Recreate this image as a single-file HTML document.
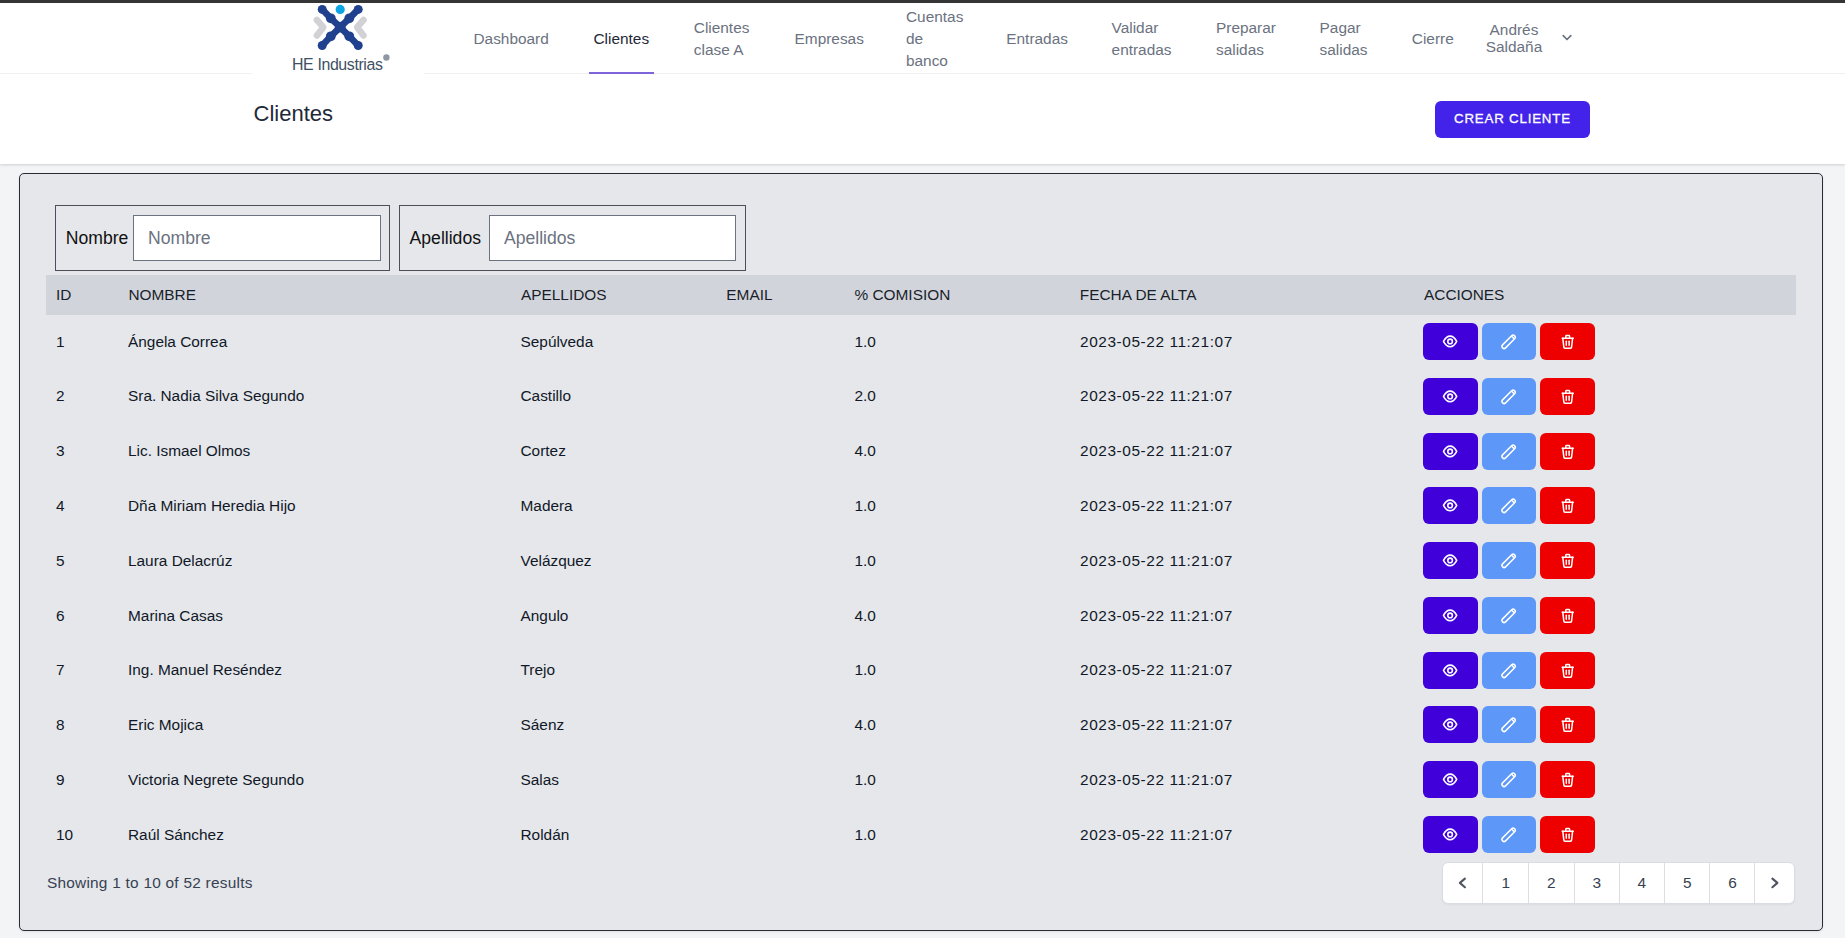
<!DOCTYPE html>
<html lang="es"><head><meta charset="utf-8"><title>Clientes</title>
<style>
*{box-sizing:border-box;margin:0;padding:0}
html,body{width:1845px;height:938px;overflow:hidden;background:#f3f4f6;font-family:"Liberation Sans", sans-serif;position:relative}
.t{position:absolute;white-space:nowrap;z-index:5}
#topbar{z-index:3;position:absolute;left:0;top:0;width:1845px;height:3px;background:#353535}
#nav{z-index:2;position:absolute;left:0;top:3px;width:1845px;height:71px;background:#fff;border-bottom:1px solid #eef0f2}
#logo{z-index:3;position:absolute;left:252px;top:3px;width:172px;height:71px;background:#fff}
#header{position:absolute;left:0;top:74px;width:1845px;height:90px;background:#fff;box-shadow:0 1px 3px rgba(0,0,0,.1),0 1px 2px rgba(0,0,0,.06)}
#crear{position:absolute;left:1435px;top:101px;width:155px;height:37px;background:#4323ea;border-radius:6px}
#card{position:absolute;left:19px;top:173px;width:1804px;height:758px;background:#e5e7eb;border:1px solid #2a2a36;border-radius:5px;box-shadow:0 1px 3px rgba(0,0,0,.08)}
.fbox{position:absolute;top:205px;height:66px;border:1px solid #4b4f5c}
.inp{position:absolute;top:215px;height:46px;background:#fff;border:1px solid #6b7280}
#thead{position:absolute;left:46px;top:275px;width:1750px;height:40px;background:#d1d5db}
.btn{position:absolute;height:37px;border-radius:6px}
#pag{position:absolute;left:1442px;top:862px;width:353px;height:42px;background:#fff;border:1px solid #d9dce1;border-radius:6px;box-shadow:0 1px 2px rgba(0,0,0,.05)}
</style></head>
<body>
<div id="topbar"></div>
<div id="nav"></div>
<div class="t" style="left:473.5px;top:28.20px;font-size:15.4px;line-height:22px;color:#6b7280;letter-spacing:0px;font-weight:400;">Dashboard</div>
<div class="t" style="left:593.5px;top:28.20px;font-size:15.4px;line-height:22px;color:#1f2937;letter-spacing:0px;font-weight:400;">Clientes</div>
<div class="t" style="left:693.8px;top:17.20px;font-size:15.4px;line-height:22px;color:#6b7280;letter-spacing:0px;font-weight:400;">Clientes<br>clase A</div>
<div class="t" style="left:794.6px;top:28.20px;font-size:15.4px;line-height:22px;color:#6b7280;letter-spacing:0px;font-weight:400;">Empresas</div>
<div class="t" style="left:906px;top:6.20px;font-size:15.4px;line-height:22px;color:#6b7280;letter-spacing:0px;font-weight:400;">Cuentas<br>de<br>banco</div>
<div class="t" style="left:1006.3px;top:28.20px;font-size:15.4px;line-height:22px;color:#6b7280;letter-spacing:0px;font-weight:400;">Entradas</div>
<div class="t" style="left:1111.6px;top:17.20px;font-size:15.4px;line-height:22px;color:#6b7280;letter-spacing:0px;font-weight:400;">Validar<br>entradas</div>
<div class="t" style="left:1216px;top:17.20px;font-size:15.4px;line-height:22px;color:#6b7280;letter-spacing:0px;font-weight:400;">Preparar<br>salidas</div>
<div class="t" style="left:1319.6px;top:17.20px;font-size:15.4px;line-height:22px;color:#6b7280;letter-spacing:0px;font-weight:400;">Pagar<br>salidas</div>
<div class="t" style="left:1411.8px;top:28.20px;font-size:15.4px;line-height:22px;color:#6b7280;letter-spacing:0px;font-weight:400;">Cierre</div>
<div style="position:absolute;z-index:4;left:589px;top:72px;width:65px;height:2px;background:#7d64db"></div>
<div class="t" style="z-index:4;left:1464px;top:21.20px;width:100px;text-align:center;font-size:15.4px;line-height:17px;color:#6b7280">Andrés<br>Saldaña</div>
<svg style="position:absolute;z-index:4;left:1560px;top:32px" width="14" height="12" viewBox="0 0 14 12"><path d="M3.2 3.7 L7 7.5 L10.8 3.7" fill="none" stroke="#6b7280" stroke-width="1.7" stroke-linecap="round" stroke-linejoin="round"/></svg>
<div id="logo"><svg width="172" height="71" viewBox="0 0 172 71" style="position:absolute;left:0;top:0">
<g stroke="#d2d2d6" stroke-width="6.5" stroke-linecap="round" stroke-linejoin="round" fill="none">
<path d="M64.9 17 L71.3 24.2 L64.9 32.5"/><path d="M111.5 17 L105.1 24.2 L111.5 32.5"/>
</g>
<g stroke="#1f418e" stroke-width="6.6" stroke-linecap="round" stroke-linejoin="round" fill="none">
<path d="M70.2 6.4 L78.8 15.3 L88.2 24.2 L97.3 33.3 L106.2 42.5"/>
<path d="M106.2 6.4 L97.3 15.3 L88.2 24.2 L78.8 33.3 L70.2 42.5"/>
</g>
<g fill="#1f418e">
<circle cx="70.2" cy="6.4" r="4.5"/><circle cx="106.2" cy="6.4" r="4.5"/>
<circle cx="70.2" cy="42.5" r="4.5"/><circle cx="106.2" cy="42.5" r="4.5"/>
<circle cx="78.8" cy="15.3" r="4.9"/><circle cx="97.3" cy="15.3" r="4.9"/>
<circle cx="78.8" cy="33.3" r="4.9"/><circle cx="97.3" cy="33.3" r="4.9"/>
<circle cx="88.2" cy="24.2" r="5.4"/>
</g>
<circle cx="88.2" cy="6.4" r="4.6" fill="#0ba5e6"/>
<circle cx="134.4" cy="54.5" r="3.2" fill="#8d98a3"/>
</svg>
<div style="position:absolute;left:39.8px;top:52.2px;font-size:16.8px;line-height:20px;color:#3e5064;letter-spacing:-0.4px;white-space:nowrap;transform:scaleX(0.948);transform-origin:0 0">HE Industrias</div>
</div>
<div id="header"></div>
<div class="t" style="left:253.6px;top:99.70px;font-size:22px;line-height:28px;color:#1f2937;letter-spacing:0px;font-weight:400;">Clientes</div>
<div id="crear"></div>
<div class="t" style="left:1454px;top:109.80px;font-size:13.3px;line-height:18px;color:#ffffff;letter-spacing:0.8px;font-weight:400;-webkit-text-stroke:0.3px #fff">CREAR CLIENTE</div>
<div id="card"></div>
<div class="fbox" style="left:55px;width:335px"></div>
<div class="fbox" style="left:399px;width:347px"></div>
<div class="inp" style="left:133px;width:248px"></div>
<div class="inp" style="left:489px;width:247px"></div>
<div class="t" style="left:65.8px;top:225.80px;font-size:17.6px;line-height:24px;color:#111111;letter-spacing:0px;font-weight:400;">Nombre</div>
<div class="t" style="left:409.6px;top:225.80px;font-size:17.6px;line-height:24px;color:#111111;letter-spacing:0px;font-weight:400;">Apellidos</div>
<div class="t" style="left:148px;top:225.90px;font-size:17.6px;line-height:24px;color:#6b7280;letter-spacing:0px;font-weight:400;">Nombre</div>
<div class="t" style="left:504px;top:225.90px;font-size:17.6px;line-height:24px;color:#6b7280;letter-spacing:0px;font-weight:400;">Apellidos</div>
<div id="thead"></div>
<div class="t" style="left:56px;top:284.80px;font-size:15.4px;line-height:20px;color:#1a1f2b;letter-spacing:0px;font-weight:400;">ID</div>
<div class="t" style="left:128.4px;top:284.80px;font-size:15.4px;line-height:20px;color:#1a1f2b;letter-spacing:0px;font-weight:400;">NOMBRE</div>
<div class="t" style="left:521px;top:284.80px;font-size:15.4px;line-height:20px;color:#1a1f2b;letter-spacing:0px;font-weight:400;">APELLIDOS</div>
<div class="t" style="left:726.3px;top:284.80px;font-size:15.4px;line-height:20px;color:#1a1f2b;letter-spacing:0px;font-weight:400;">EMAIL</div>
<div class="t" style="left:854.5px;top:284.80px;font-size:15.4px;line-height:20px;color:#1a1f2b;letter-spacing:0px;font-weight:400;">% COMISION</div>
<div class="t" style="left:1079.8px;top:284.80px;font-size:15.4px;line-height:20px;color:#1a1f2b;letter-spacing:0px;font-weight:400;">FECHA DE ALTA</div>
<div class="t" style="left:1424px;top:284.80px;font-size:15.4px;line-height:20px;color:#1a1f2b;letter-spacing:0px;font-weight:400;">ACCIONES</div>
<div class="t" style="left:56px;top:331.70px;font-size:15.4px;line-height:20px;color:#111827;letter-spacing:0px;font-weight:400;">1</div>
<div class="t" style="left:128px;top:331.70px;font-size:15.4px;line-height:20px;color:#111827;letter-spacing:0px;font-weight:400;">Ángela Correa</div>
<div class="t" style="left:520.5px;top:331.70px;font-size:15.4px;line-height:20px;color:#111827;letter-spacing:0px;font-weight:400;">Sepúlveda</div>
<div class="t" style="left:854.5px;top:331.70px;font-size:15.4px;line-height:20px;color:#111827;letter-spacing:0px;font-weight:400;">1.0</div>
<div class="t" style="left:1080px;top:331.70px;font-size:15.4px;line-height:20px;color:#111827;letter-spacing:0.58px;font-weight:400;">2023-05-22 11:21:07</div>
<div class="btn" style="left:1423px;top:323.00px;width:55px;background:#3f00d9"><svg width="55" height="37" viewBox="0 0 55 37" style="position:absolute;left:0;top:0" fill="none" stroke="#fff" stroke-width="1.6" stroke-linecap="round" stroke-linejoin="round"><path d="M20.5 18.4 C22.4 14.6 24.8 13.1 27.1 13.1 C29.4 13.1 31.8 14.6 33.7 18.4 C31.8 22.2 29.4 23.7 27.1 23.7 C24.8 23.7 22.4 22.2 20.5 18.4 Z"/><circle cx="27.1" cy="18.4" r="2.3"/></svg></div>
<div class="btn" style="left:1482px;top:323.00px;width:54px;background:#5d97f8"><svg width="54" height="37" viewBox="0 0 54 37" style="position:absolute;left:0;top:0" fill="none" stroke="#fff" stroke-width="1.5" stroke-linecap="round" stroke-linejoin="round"><rect x="18.1" y="16.75" width="17" height="4.2" rx="2.1" transform="rotate(-45 26.6 18.85)"/><path d="M29.9 13.5 L31.9 15.5"/></svg></div>
<div class="btn" style="left:1540px;top:323.00px;width:55px;background:#ee0000"><svg width="55" height="37" viewBox="0 0 55 37" style="position:absolute;left:0;top:0" fill="none" stroke="#fff" stroke-width="1.5" stroke-linecap="round" stroke-linejoin="round"><path d="M22.2 15.2 H33.2"/><path d="M22.8 15.2 L23.8 24 A1.6 1.6 0 0 0 25.4 25.3 H30 A1.6 1.6 0 0 0 31.6 24 L32.6 15.2"/><path d="M25.8 15 V13.2 A0.9 0.9 0 0 1 26.7 12.4 H28.7 A0.9 0.9 0 0 1 29.6 13.2 V15"/><path d="M26.3 18.3 V22.3"/><path d="M29.1 18.3 V22.3"/></svg></div>
<div class="t" style="left:56px;top:386.48px;font-size:15.4px;line-height:20px;color:#111827;letter-spacing:0px;font-weight:400;">2</div>
<div class="t" style="left:128px;top:386.48px;font-size:15.4px;line-height:20px;color:#111827;letter-spacing:0px;font-weight:400;">Sra. Nadia Silva Segundo</div>
<div class="t" style="left:520.5px;top:386.48px;font-size:15.4px;line-height:20px;color:#111827;letter-spacing:0px;font-weight:400;">Castillo</div>
<div class="t" style="left:854.5px;top:386.48px;font-size:15.4px;line-height:20px;color:#111827;letter-spacing:0px;font-weight:400;">2.0</div>
<div class="t" style="left:1080px;top:386.48px;font-size:15.4px;line-height:20px;color:#111827;letter-spacing:0.58px;font-weight:400;">2023-05-22 11:21:07</div>
<div class="btn" style="left:1423px;top:377.78px;width:55px;background:#3f00d9"><svg width="55" height="37" viewBox="0 0 55 37" style="position:absolute;left:0;top:0" fill="none" stroke="#fff" stroke-width="1.6" stroke-linecap="round" stroke-linejoin="round"><path d="M20.5 18.4 C22.4 14.6 24.8 13.1 27.1 13.1 C29.4 13.1 31.8 14.6 33.7 18.4 C31.8 22.2 29.4 23.7 27.1 23.7 C24.8 23.7 22.4 22.2 20.5 18.4 Z"/><circle cx="27.1" cy="18.4" r="2.3"/></svg></div>
<div class="btn" style="left:1482px;top:377.78px;width:54px;background:#5d97f8"><svg width="54" height="37" viewBox="0 0 54 37" style="position:absolute;left:0;top:0" fill="none" stroke="#fff" stroke-width="1.5" stroke-linecap="round" stroke-linejoin="round"><rect x="18.1" y="16.75" width="17" height="4.2" rx="2.1" transform="rotate(-45 26.6 18.85)"/><path d="M29.9 13.5 L31.9 15.5"/></svg></div>
<div class="btn" style="left:1540px;top:377.78px;width:55px;background:#ee0000"><svg width="55" height="37" viewBox="0 0 55 37" style="position:absolute;left:0;top:0" fill="none" stroke="#fff" stroke-width="1.5" stroke-linecap="round" stroke-linejoin="round"><path d="M22.2 15.2 H33.2"/><path d="M22.8 15.2 L23.8 24 A1.6 1.6 0 0 0 25.4 25.3 H30 A1.6 1.6 0 0 0 31.6 24 L32.6 15.2"/><path d="M25.8 15 V13.2 A0.9 0.9 0 0 1 26.7 12.4 H28.7 A0.9 0.9 0 0 1 29.6 13.2 V15"/><path d="M26.3 18.3 V22.3"/><path d="M29.1 18.3 V22.3"/></svg></div>
<div class="t" style="left:56px;top:441.26px;font-size:15.4px;line-height:20px;color:#111827;letter-spacing:0px;font-weight:400;">3</div>
<div class="t" style="left:128px;top:441.26px;font-size:15.4px;line-height:20px;color:#111827;letter-spacing:0px;font-weight:400;">Lic. Ismael Olmos</div>
<div class="t" style="left:520.5px;top:441.26px;font-size:15.4px;line-height:20px;color:#111827;letter-spacing:0px;font-weight:400;">Cortez</div>
<div class="t" style="left:854.5px;top:441.26px;font-size:15.4px;line-height:20px;color:#111827;letter-spacing:0px;font-weight:400;">4.0</div>
<div class="t" style="left:1080px;top:441.26px;font-size:15.4px;line-height:20px;color:#111827;letter-spacing:0.58px;font-weight:400;">2023-05-22 11:21:07</div>
<div class="btn" style="left:1423px;top:432.56px;width:55px;background:#3f00d9"><svg width="55" height="37" viewBox="0 0 55 37" style="position:absolute;left:0;top:0" fill="none" stroke="#fff" stroke-width="1.6" stroke-linecap="round" stroke-linejoin="round"><path d="M20.5 18.4 C22.4 14.6 24.8 13.1 27.1 13.1 C29.4 13.1 31.8 14.6 33.7 18.4 C31.8 22.2 29.4 23.7 27.1 23.7 C24.8 23.7 22.4 22.2 20.5 18.4 Z"/><circle cx="27.1" cy="18.4" r="2.3"/></svg></div>
<div class="btn" style="left:1482px;top:432.56px;width:54px;background:#5d97f8"><svg width="54" height="37" viewBox="0 0 54 37" style="position:absolute;left:0;top:0" fill="none" stroke="#fff" stroke-width="1.5" stroke-linecap="round" stroke-linejoin="round"><rect x="18.1" y="16.75" width="17" height="4.2" rx="2.1" transform="rotate(-45 26.6 18.85)"/><path d="M29.9 13.5 L31.9 15.5"/></svg></div>
<div class="btn" style="left:1540px;top:432.56px;width:55px;background:#ee0000"><svg width="55" height="37" viewBox="0 0 55 37" style="position:absolute;left:0;top:0" fill="none" stroke="#fff" stroke-width="1.5" stroke-linecap="round" stroke-linejoin="round"><path d="M22.2 15.2 H33.2"/><path d="M22.8 15.2 L23.8 24 A1.6 1.6 0 0 0 25.4 25.3 H30 A1.6 1.6 0 0 0 31.6 24 L32.6 15.2"/><path d="M25.8 15 V13.2 A0.9 0.9 0 0 1 26.7 12.4 H28.7 A0.9 0.9 0 0 1 29.6 13.2 V15"/><path d="M26.3 18.3 V22.3"/><path d="M29.1 18.3 V22.3"/></svg></div>
<div class="t" style="left:56px;top:496.04px;font-size:15.4px;line-height:20px;color:#111827;letter-spacing:0px;font-weight:400;">4</div>
<div class="t" style="left:128px;top:496.04px;font-size:15.4px;line-height:20px;color:#111827;letter-spacing:0px;font-weight:400;">Dña Miriam Heredia Hijo</div>
<div class="t" style="left:520.5px;top:496.04px;font-size:15.4px;line-height:20px;color:#111827;letter-spacing:0px;font-weight:400;">Madera</div>
<div class="t" style="left:854.5px;top:496.04px;font-size:15.4px;line-height:20px;color:#111827;letter-spacing:0px;font-weight:400;">1.0</div>
<div class="t" style="left:1080px;top:496.04px;font-size:15.4px;line-height:20px;color:#111827;letter-spacing:0.58px;font-weight:400;">2023-05-22 11:21:07</div>
<div class="btn" style="left:1423px;top:487.34px;width:55px;background:#3f00d9"><svg width="55" height="37" viewBox="0 0 55 37" style="position:absolute;left:0;top:0" fill="none" stroke="#fff" stroke-width="1.6" stroke-linecap="round" stroke-linejoin="round"><path d="M20.5 18.4 C22.4 14.6 24.8 13.1 27.1 13.1 C29.4 13.1 31.8 14.6 33.7 18.4 C31.8 22.2 29.4 23.7 27.1 23.7 C24.8 23.7 22.4 22.2 20.5 18.4 Z"/><circle cx="27.1" cy="18.4" r="2.3"/></svg></div>
<div class="btn" style="left:1482px;top:487.34px;width:54px;background:#5d97f8"><svg width="54" height="37" viewBox="0 0 54 37" style="position:absolute;left:0;top:0" fill="none" stroke="#fff" stroke-width="1.5" stroke-linecap="round" stroke-linejoin="round"><rect x="18.1" y="16.75" width="17" height="4.2" rx="2.1" transform="rotate(-45 26.6 18.85)"/><path d="M29.9 13.5 L31.9 15.5"/></svg></div>
<div class="btn" style="left:1540px;top:487.34px;width:55px;background:#ee0000"><svg width="55" height="37" viewBox="0 0 55 37" style="position:absolute;left:0;top:0" fill="none" stroke="#fff" stroke-width="1.5" stroke-linecap="round" stroke-linejoin="round"><path d="M22.2 15.2 H33.2"/><path d="M22.8 15.2 L23.8 24 A1.6 1.6 0 0 0 25.4 25.3 H30 A1.6 1.6 0 0 0 31.6 24 L32.6 15.2"/><path d="M25.8 15 V13.2 A0.9 0.9 0 0 1 26.7 12.4 H28.7 A0.9 0.9 0 0 1 29.6 13.2 V15"/><path d="M26.3 18.3 V22.3"/><path d="M29.1 18.3 V22.3"/></svg></div>
<div class="t" style="left:56px;top:550.82px;font-size:15.4px;line-height:20px;color:#111827;letter-spacing:0px;font-weight:400;">5</div>
<div class="t" style="left:128px;top:550.82px;font-size:15.4px;line-height:20px;color:#111827;letter-spacing:0px;font-weight:400;">Laura Delacrúz</div>
<div class="t" style="left:520.5px;top:550.82px;font-size:15.4px;line-height:20px;color:#111827;letter-spacing:0px;font-weight:400;">Velázquez</div>
<div class="t" style="left:854.5px;top:550.82px;font-size:15.4px;line-height:20px;color:#111827;letter-spacing:0px;font-weight:400;">1.0</div>
<div class="t" style="left:1080px;top:550.82px;font-size:15.4px;line-height:20px;color:#111827;letter-spacing:0.58px;font-weight:400;">2023-05-22 11:21:07</div>
<div class="btn" style="left:1423px;top:542.12px;width:55px;background:#3f00d9"><svg width="55" height="37" viewBox="0 0 55 37" style="position:absolute;left:0;top:0" fill="none" stroke="#fff" stroke-width="1.6" stroke-linecap="round" stroke-linejoin="round"><path d="M20.5 18.4 C22.4 14.6 24.8 13.1 27.1 13.1 C29.4 13.1 31.8 14.6 33.7 18.4 C31.8 22.2 29.4 23.7 27.1 23.7 C24.8 23.7 22.4 22.2 20.5 18.4 Z"/><circle cx="27.1" cy="18.4" r="2.3"/></svg></div>
<div class="btn" style="left:1482px;top:542.12px;width:54px;background:#5d97f8"><svg width="54" height="37" viewBox="0 0 54 37" style="position:absolute;left:0;top:0" fill="none" stroke="#fff" stroke-width="1.5" stroke-linecap="round" stroke-linejoin="round"><rect x="18.1" y="16.75" width="17" height="4.2" rx="2.1" transform="rotate(-45 26.6 18.85)"/><path d="M29.9 13.5 L31.9 15.5"/></svg></div>
<div class="btn" style="left:1540px;top:542.12px;width:55px;background:#ee0000"><svg width="55" height="37" viewBox="0 0 55 37" style="position:absolute;left:0;top:0" fill="none" stroke="#fff" stroke-width="1.5" stroke-linecap="round" stroke-linejoin="round"><path d="M22.2 15.2 H33.2"/><path d="M22.8 15.2 L23.8 24 A1.6 1.6 0 0 0 25.4 25.3 H30 A1.6 1.6 0 0 0 31.6 24 L32.6 15.2"/><path d="M25.8 15 V13.2 A0.9 0.9 0 0 1 26.7 12.4 H28.7 A0.9 0.9 0 0 1 29.6 13.2 V15"/><path d="M26.3 18.3 V22.3"/><path d="M29.1 18.3 V22.3"/></svg></div>
<div class="t" style="left:56px;top:605.60px;font-size:15.4px;line-height:20px;color:#111827;letter-spacing:0px;font-weight:400;">6</div>
<div class="t" style="left:128px;top:605.60px;font-size:15.4px;line-height:20px;color:#111827;letter-spacing:0px;font-weight:400;">Marina Casas</div>
<div class="t" style="left:520.5px;top:605.60px;font-size:15.4px;line-height:20px;color:#111827;letter-spacing:0px;font-weight:400;">Angulo</div>
<div class="t" style="left:854.5px;top:605.60px;font-size:15.4px;line-height:20px;color:#111827;letter-spacing:0px;font-weight:400;">4.0</div>
<div class="t" style="left:1080px;top:605.60px;font-size:15.4px;line-height:20px;color:#111827;letter-spacing:0.58px;font-weight:400;">2023-05-22 11:21:07</div>
<div class="btn" style="left:1423px;top:596.90px;width:55px;background:#3f00d9"><svg width="55" height="37" viewBox="0 0 55 37" style="position:absolute;left:0;top:0" fill="none" stroke="#fff" stroke-width="1.6" stroke-linecap="round" stroke-linejoin="round"><path d="M20.5 18.4 C22.4 14.6 24.8 13.1 27.1 13.1 C29.4 13.1 31.8 14.6 33.7 18.4 C31.8 22.2 29.4 23.7 27.1 23.7 C24.8 23.7 22.4 22.2 20.5 18.4 Z"/><circle cx="27.1" cy="18.4" r="2.3"/></svg></div>
<div class="btn" style="left:1482px;top:596.90px;width:54px;background:#5d97f8"><svg width="54" height="37" viewBox="0 0 54 37" style="position:absolute;left:0;top:0" fill="none" stroke="#fff" stroke-width="1.5" stroke-linecap="round" stroke-linejoin="round"><rect x="18.1" y="16.75" width="17" height="4.2" rx="2.1" transform="rotate(-45 26.6 18.85)"/><path d="M29.9 13.5 L31.9 15.5"/></svg></div>
<div class="btn" style="left:1540px;top:596.90px;width:55px;background:#ee0000"><svg width="55" height="37" viewBox="0 0 55 37" style="position:absolute;left:0;top:0" fill="none" stroke="#fff" stroke-width="1.5" stroke-linecap="round" stroke-linejoin="round"><path d="M22.2 15.2 H33.2"/><path d="M22.8 15.2 L23.8 24 A1.6 1.6 0 0 0 25.4 25.3 H30 A1.6 1.6 0 0 0 31.6 24 L32.6 15.2"/><path d="M25.8 15 V13.2 A0.9 0.9 0 0 1 26.7 12.4 H28.7 A0.9 0.9 0 0 1 29.6 13.2 V15"/><path d="M26.3 18.3 V22.3"/><path d="M29.1 18.3 V22.3"/></svg></div>
<div class="t" style="left:56px;top:660.38px;font-size:15.4px;line-height:20px;color:#111827;letter-spacing:0px;font-weight:400;">7</div>
<div class="t" style="left:128px;top:660.38px;font-size:15.4px;line-height:20px;color:#111827;letter-spacing:0px;font-weight:400;">Ing. Manuel Reséndez</div>
<div class="t" style="left:520.5px;top:660.38px;font-size:15.4px;line-height:20px;color:#111827;letter-spacing:0px;font-weight:400;">Trejo</div>
<div class="t" style="left:854.5px;top:660.38px;font-size:15.4px;line-height:20px;color:#111827;letter-spacing:0px;font-weight:400;">1.0</div>
<div class="t" style="left:1080px;top:660.38px;font-size:15.4px;line-height:20px;color:#111827;letter-spacing:0.58px;font-weight:400;">2023-05-22 11:21:07</div>
<div class="btn" style="left:1423px;top:651.68px;width:55px;background:#3f00d9"><svg width="55" height="37" viewBox="0 0 55 37" style="position:absolute;left:0;top:0" fill="none" stroke="#fff" stroke-width="1.6" stroke-linecap="round" stroke-linejoin="round"><path d="M20.5 18.4 C22.4 14.6 24.8 13.1 27.1 13.1 C29.4 13.1 31.8 14.6 33.7 18.4 C31.8 22.2 29.4 23.7 27.1 23.7 C24.8 23.7 22.4 22.2 20.5 18.4 Z"/><circle cx="27.1" cy="18.4" r="2.3"/></svg></div>
<div class="btn" style="left:1482px;top:651.68px;width:54px;background:#5d97f8"><svg width="54" height="37" viewBox="0 0 54 37" style="position:absolute;left:0;top:0" fill="none" stroke="#fff" stroke-width="1.5" stroke-linecap="round" stroke-linejoin="round"><rect x="18.1" y="16.75" width="17" height="4.2" rx="2.1" transform="rotate(-45 26.6 18.85)"/><path d="M29.9 13.5 L31.9 15.5"/></svg></div>
<div class="btn" style="left:1540px;top:651.68px;width:55px;background:#ee0000"><svg width="55" height="37" viewBox="0 0 55 37" style="position:absolute;left:0;top:0" fill="none" stroke="#fff" stroke-width="1.5" stroke-linecap="round" stroke-linejoin="round"><path d="M22.2 15.2 H33.2"/><path d="M22.8 15.2 L23.8 24 A1.6 1.6 0 0 0 25.4 25.3 H30 A1.6 1.6 0 0 0 31.6 24 L32.6 15.2"/><path d="M25.8 15 V13.2 A0.9 0.9 0 0 1 26.7 12.4 H28.7 A0.9 0.9 0 0 1 29.6 13.2 V15"/><path d="M26.3 18.3 V22.3"/><path d="M29.1 18.3 V22.3"/></svg></div>
<div class="t" style="left:56px;top:715.16px;font-size:15.4px;line-height:20px;color:#111827;letter-spacing:0px;font-weight:400;">8</div>
<div class="t" style="left:128px;top:715.16px;font-size:15.4px;line-height:20px;color:#111827;letter-spacing:0px;font-weight:400;">Eric Mojica</div>
<div class="t" style="left:520.5px;top:715.16px;font-size:15.4px;line-height:20px;color:#111827;letter-spacing:0px;font-weight:400;">Sáenz</div>
<div class="t" style="left:854.5px;top:715.16px;font-size:15.4px;line-height:20px;color:#111827;letter-spacing:0px;font-weight:400;">4.0</div>
<div class="t" style="left:1080px;top:715.16px;font-size:15.4px;line-height:20px;color:#111827;letter-spacing:0.58px;font-weight:400;">2023-05-22 11:21:07</div>
<div class="btn" style="left:1423px;top:706.46px;width:55px;background:#3f00d9"><svg width="55" height="37" viewBox="0 0 55 37" style="position:absolute;left:0;top:0" fill="none" stroke="#fff" stroke-width="1.6" stroke-linecap="round" stroke-linejoin="round"><path d="M20.5 18.4 C22.4 14.6 24.8 13.1 27.1 13.1 C29.4 13.1 31.8 14.6 33.7 18.4 C31.8 22.2 29.4 23.7 27.1 23.7 C24.8 23.7 22.4 22.2 20.5 18.4 Z"/><circle cx="27.1" cy="18.4" r="2.3"/></svg></div>
<div class="btn" style="left:1482px;top:706.46px;width:54px;background:#5d97f8"><svg width="54" height="37" viewBox="0 0 54 37" style="position:absolute;left:0;top:0" fill="none" stroke="#fff" stroke-width="1.5" stroke-linecap="round" stroke-linejoin="round"><rect x="18.1" y="16.75" width="17" height="4.2" rx="2.1" transform="rotate(-45 26.6 18.85)"/><path d="M29.9 13.5 L31.9 15.5"/></svg></div>
<div class="btn" style="left:1540px;top:706.46px;width:55px;background:#ee0000"><svg width="55" height="37" viewBox="0 0 55 37" style="position:absolute;left:0;top:0" fill="none" stroke="#fff" stroke-width="1.5" stroke-linecap="round" stroke-linejoin="round"><path d="M22.2 15.2 H33.2"/><path d="M22.8 15.2 L23.8 24 A1.6 1.6 0 0 0 25.4 25.3 H30 A1.6 1.6 0 0 0 31.6 24 L32.6 15.2"/><path d="M25.8 15 V13.2 A0.9 0.9 0 0 1 26.7 12.4 H28.7 A0.9 0.9 0 0 1 29.6 13.2 V15"/><path d="M26.3 18.3 V22.3"/><path d="M29.1 18.3 V22.3"/></svg></div>
<div class="t" style="left:56px;top:769.94px;font-size:15.4px;line-height:20px;color:#111827;letter-spacing:0px;font-weight:400;">9</div>
<div class="t" style="left:128px;top:769.94px;font-size:15.4px;line-height:20px;color:#111827;letter-spacing:0px;font-weight:400;">Victoria Negrete Segundo</div>
<div class="t" style="left:520.5px;top:769.94px;font-size:15.4px;line-height:20px;color:#111827;letter-spacing:0px;font-weight:400;">Salas</div>
<div class="t" style="left:854.5px;top:769.94px;font-size:15.4px;line-height:20px;color:#111827;letter-spacing:0px;font-weight:400;">1.0</div>
<div class="t" style="left:1080px;top:769.94px;font-size:15.4px;line-height:20px;color:#111827;letter-spacing:0.58px;font-weight:400;">2023-05-22 11:21:07</div>
<div class="btn" style="left:1423px;top:761.24px;width:55px;background:#3f00d9"><svg width="55" height="37" viewBox="0 0 55 37" style="position:absolute;left:0;top:0" fill="none" stroke="#fff" stroke-width="1.6" stroke-linecap="round" stroke-linejoin="round"><path d="M20.5 18.4 C22.4 14.6 24.8 13.1 27.1 13.1 C29.4 13.1 31.8 14.6 33.7 18.4 C31.8 22.2 29.4 23.7 27.1 23.7 C24.8 23.7 22.4 22.2 20.5 18.4 Z"/><circle cx="27.1" cy="18.4" r="2.3"/></svg></div>
<div class="btn" style="left:1482px;top:761.24px;width:54px;background:#5d97f8"><svg width="54" height="37" viewBox="0 0 54 37" style="position:absolute;left:0;top:0" fill="none" stroke="#fff" stroke-width="1.5" stroke-linecap="round" stroke-linejoin="round"><rect x="18.1" y="16.75" width="17" height="4.2" rx="2.1" transform="rotate(-45 26.6 18.85)"/><path d="M29.9 13.5 L31.9 15.5"/></svg></div>
<div class="btn" style="left:1540px;top:761.24px;width:55px;background:#ee0000"><svg width="55" height="37" viewBox="0 0 55 37" style="position:absolute;left:0;top:0" fill="none" stroke="#fff" stroke-width="1.5" stroke-linecap="round" stroke-linejoin="round"><path d="M22.2 15.2 H33.2"/><path d="M22.8 15.2 L23.8 24 A1.6 1.6 0 0 0 25.4 25.3 H30 A1.6 1.6 0 0 0 31.6 24 L32.6 15.2"/><path d="M25.8 15 V13.2 A0.9 0.9 0 0 1 26.7 12.4 H28.7 A0.9 0.9 0 0 1 29.6 13.2 V15"/><path d="M26.3 18.3 V22.3"/><path d="M29.1 18.3 V22.3"/></svg></div>
<div class="t" style="left:56px;top:824.72px;font-size:15.4px;line-height:20px;color:#111827;letter-spacing:0px;font-weight:400;">10</div>
<div class="t" style="left:128px;top:824.72px;font-size:15.4px;line-height:20px;color:#111827;letter-spacing:0px;font-weight:400;">Raúl Sánchez</div>
<div class="t" style="left:520.5px;top:824.72px;font-size:15.4px;line-height:20px;color:#111827;letter-spacing:0px;font-weight:400;">Roldán</div>
<div class="t" style="left:854.5px;top:824.72px;font-size:15.4px;line-height:20px;color:#111827;letter-spacing:0px;font-weight:400;">1.0</div>
<div class="t" style="left:1080px;top:824.72px;font-size:15.4px;line-height:20px;color:#111827;letter-spacing:0.58px;font-weight:400;">2023-05-22 11:21:07</div>
<div class="btn" style="left:1423px;top:816.02px;width:55px;background:#3f00d9"><svg width="55" height="37" viewBox="0 0 55 37" style="position:absolute;left:0;top:0" fill="none" stroke="#fff" stroke-width="1.6" stroke-linecap="round" stroke-linejoin="round"><path d="M20.5 18.4 C22.4 14.6 24.8 13.1 27.1 13.1 C29.4 13.1 31.8 14.6 33.7 18.4 C31.8 22.2 29.4 23.7 27.1 23.7 C24.8 23.7 22.4 22.2 20.5 18.4 Z"/><circle cx="27.1" cy="18.4" r="2.3"/></svg></div>
<div class="btn" style="left:1482px;top:816.02px;width:54px;background:#5d97f8"><svg width="54" height="37" viewBox="0 0 54 37" style="position:absolute;left:0;top:0" fill="none" stroke="#fff" stroke-width="1.5" stroke-linecap="round" stroke-linejoin="round"><rect x="18.1" y="16.75" width="17" height="4.2" rx="2.1" transform="rotate(-45 26.6 18.85)"/><path d="M29.9 13.5 L31.9 15.5"/></svg></div>
<div class="btn" style="left:1540px;top:816.02px;width:55px;background:#ee0000"><svg width="55" height="37" viewBox="0 0 55 37" style="position:absolute;left:0;top:0" fill="none" stroke="#fff" stroke-width="1.5" stroke-linecap="round" stroke-linejoin="round"><path d="M22.2 15.2 H33.2"/><path d="M22.8 15.2 L23.8 24 A1.6 1.6 0 0 0 25.4 25.3 H30 A1.6 1.6 0 0 0 31.6 24 L32.6 15.2"/><path d="M25.8 15 V13.2 A0.9 0.9 0 0 1 26.7 12.4 H28.7 A0.9 0.9 0 0 1 29.6 13.2 V15"/><path d="M26.3 18.3 V22.3"/><path d="M29.1 18.3 V22.3"/></svg></div>
<div class="t" style="left:46.9px;top:873.00px;font-size:15.4px;line-height:20px;color:#374151;letter-spacing:0.25px;font-weight:400;">Showing 1 to 10 of 52 results</div>
<div id="pag"></div>
<div style="position:absolute;left:1482.4px;top:863px;width:1px;height:40px;background:#dcdee3"></div>
<div style="position:absolute;left:1527.6px;top:863px;width:1px;height:40px;background:#dcdee3"></div>
<div style="position:absolute;left:1573.5px;top:863px;width:1px;height:40px;background:#dcdee3"></div>
<div style="position:absolute;left:1618.5px;top:863px;width:1px;height:40px;background:#dcdee3"></div>
<div style="position:absolute;left:1663.5px;top:863px;width:1px;height:40px;background:#dcdee3"></div>
<div style="position:absolute;left:1709.4px;top:863px;width:1px;height:40px;background:#dcdee3"></div>
<div style="position:absolute;left:1754.4px;top:863px;width:1px;height:40px;background:#dcdee3"></div>
<div class="t" style="left:1485.7px;width:40px;text-align:center;top:873.20px;font-size:15.4px;line-height:20px;color:#374151">1</div>
<div class="t" style="left:1531.2px;width:40px;text-align:center;top:873.20px;font-size:15.4px;line-height:20px;color:#374151">2</div>
<div class="t" style="left:1576.7px;width:40px;text-align:center;top:873.20px;font-size:15.4px;line-height:20px;color:#374151">3</div>
<div class="t" style="left:1621.7px;width:40px;text-align:center;top:873.20px;font-size:15.4px;line-height:20px;color:#374151">4</div>
<div class="t" style="left:1667.2px;width:40px;text-align:center;top:873.20px;font-size:15.4px;line-height:20px;color:#374151">5</div>
<div class="t" style="left:1712.6px;width:40px;text-align:center;top:873.20px;font-size:15.4px;line-height:20px;color:#374151">6</div>
<svg style="position:absolute;left:1455px;top:875px" width="14" height="16" viewBox="0 0 14 16"><path d="M9.9 3.6 L4.9 7.9 L9.9 12.2" fill="none" stroke="#50545e" stroke-width="2.1" stroke-linecap="round" stroke-linejoin="round"/></svg>
<svg style="position:absolute;left:1767px;top:875px" width="14" height="16" viewBox="0 0 14 16"><path d="M5.4 3.6 L10.4 7.9 L5.4 12.2" fill="none" stroke="#50545e" stroke-width="2.1" stroke-linecap="round" stroke-linejoin="round"/></svg>
</body></html>
